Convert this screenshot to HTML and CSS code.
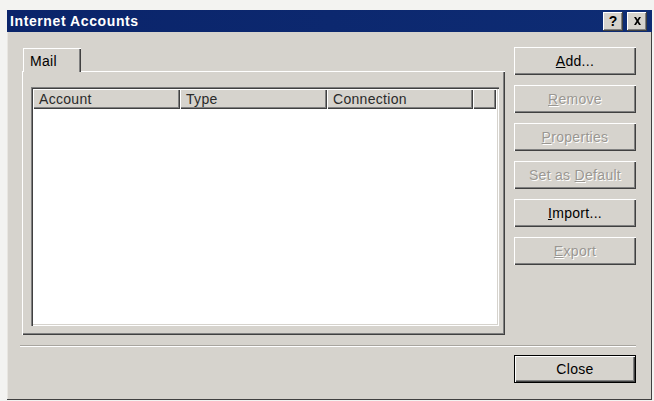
FILE: index.html
```html
<!DOCTYPE html>
<html lang="en">
<head>
    <meta charset="UTF-8">
    <title>Internet Accounts</title>
    <link rel="stylesheet" href="styles.css">
</head>
<body>
    <div class="dialog">
        <div class="titlebar">
            <span class="title">Internet Accounts</span>
            <div class="caption-btns">
                <button class="cap">?</button>
                <button class="cap">
                    <svg width="9" height="8" viewBox="0 0 9 8"><path d="M1 0h2l1.5 2.5L6 0h2L5.5 4 8 8H6L4.5 5.5 3 8H1l2.5-4z" fill="#000"/></svg>
                </button>
            </div>
        </div>
        <div class="body">
            <div class="main">
                <div class="tabs-col">
                    <div class="tabs">
                        <div class="tab">Mail</div>
                    </div>
                    <div class="panel">
                        <div class="list">
                            <div class="list-head">
                                <div class="col c-account">Account</div>
                                <div class="col c-type">Type</div>
                                <div class="col c-conn">Connection</div>
                                <div class="col c-rest"></div>
                            </div>
                            <div class="list-body"></div>
                        </div>
                    </div>
                </div>
                <div class="side">
                    <button class="btn"><u>A</u>dd...</button>
                    <button class="btn" disabled><u>R</u>emove</button>
                    <button class="btn" disabled><u>P</u>roperties</button>
                    <button class="btn" disabled>Set as <u>D</u>efault</button>
                    <button class="btn"><u>I</u>mport...</button>
                    <button class="btn" disabled><u>E</u>xport</button>
                </div>
            </div>
            <div class="sep"></div>
            <div class="footer">
                <button class="btn default">Close</button>
            </div>
        </div>
    </div>
</body>
</html>
```

FILE: styles.css
```css
body { margin: 0; background: #f3f3f1; font-family: "Liberation Sans", Arial, sans-serif; font-size: 14px; letter-spacing: 0.3px; color: #000; }
.dialog { width: 645px; height: 390px; margin: 10px 0 0 7px; background: #d6d3cd; box-shadow: inset -1px -1px #404040, inset 1px 1px #e8e6e1; display: flex; flex-direction: column; }

/* title bar */
.titlebar { height: 22px; background: linear-gradient(90deg, #0a246a, #0e2c74); display: flex; align-items: center; justify-content: space-between; padding: 0 5px 0 3px; }
.title { color: #fff; font-weight: bold; font-size: 14px; letter-spacing: 0.6px; }
.caption-btns { display: flex; gap: 4px; }
.cap { width: 20px; height: 19px; padding: 0; border: none; background: #d6d3cd; font: bold 14px "Liberation Sans", Arial, sans-serif; color: #000; display: flex; align-items: center; justify-content: center; box-shadow: inset -1px -1px #404040, inset 1px 1px #fff, inset -2px -2px #808080; }

.body { flex: 1; display: flex; flex-direction: column; }
.main { display: flex; padding: 15px 16px 0 15px; gap: 9px; }

/* tab control */
.tabs-col { width: 483px; display: flex; flex-direction: column; }
.tabs { height: 24px; display: flex; align-items: flex-end; padding-left: 1px; }
.tab { width: 58px; height: 24px; box-sizing: border-box; padding: 5px 0 0 7px; background: #d6d3cd; box-shadow: inset 1px 1px #fff, inset -1px 0 #404040, inset -2px 0 #808080; position: relative; z-index: 1; margin-bottom: -1px; }
.panel { height: 264px; box-sizing: border-box; padding: 16px 6px 9px 9px; box-shadow: inset 1px 1px #fff, inset -1px -1px #404040, inset -2px -2px #808080; }

/* list view */
.list { height: 100%; box-sizing: border-box; background: #fff; padding: 2px; box-shadow: inset 1px 1px #808080, inset 2px 2px #404040, inset -1px -1px #fff, inset -2px -2px #d6d3cd; display: flex; flex-direction: column; }
.list-head { display: flex; height: 20px; }
.col { box-sizing: border-box; padding: 2px 6px 0; background: #d6d3cd; color: #2a2a2a; box-shadow: inset 1px 1px #fff, inset -1px -1px #404040, inset -2px -2px #808080; }
.c-account { width: 147px; }
.c-type { width: 147px; }
.c-conn { width: 146px; }
.c-rest { width: 23px; }
.list-body { flex: 1; }

/* push buttons */
.side { display: flex; flex-direction: column; gap: 10px; }
.btn { width: 122px; height: 28px; border: none; background: #d6d3cd; font: 14px "Liberation Sans", Arial, sans-serif; letter-spacing: 0.3px; color: #000; padding: 0; box-shadow: inset 1px 1px #fff, inset -1px -1px #404040, inset -2px -2px #808080; }
.btn:disabled { color: #9a9792; text-shadow: 1px 1px #fff; }
.btn.default { box-shadow: inset 0 0 0 1px #000, inset 2px 2px #fff, inset -2px -2px #404040, inset -3px -3px #808080; }

.sep { margin: 10px 16px 0 13px; height: 0; border-top: 1px solid #a8a59f; border-bottom: 1px solid #fff; }
.footer { display: flex; justify-content: flex-end; padding: 8px 16px 0; }
```
